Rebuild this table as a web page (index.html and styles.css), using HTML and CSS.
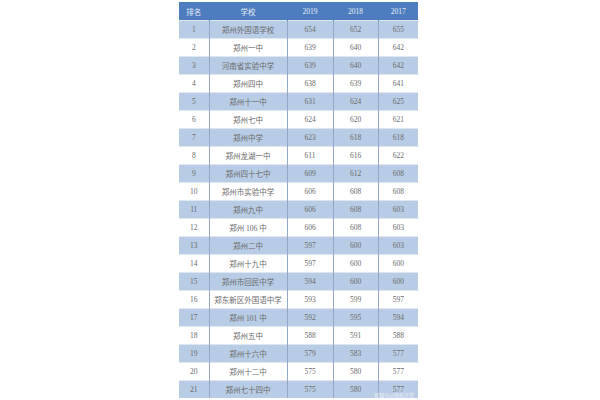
FILE: index.html
```html
<!DOCTYPE html>
<html>
<head>
<meta charset="utf-8">
<link rel="stylesheet" href="styles.css">
</head>
<body>
<div class="wrap">
<table class="rank">
<colgroup><col class="c1"><col class="c2"><col class="c3"><col class="c4"><col class="c5"></colgroup>
<thead>
<tr><th>排名</th><th>学校</th><th>2019</th><th>2018</th><th>2017</th></tr>
</thead>
<tbody>
<tr><td>1</td><td>郑州外国语学校</td><td>654</td><td>652</td><td>655</td></tr>
<tr><td>2</td><td>郑州一中</td><td>639</td><td>640</td><td>642</td></tr>
<tr><td>3</td><td>河南省实验中学</td><td>639</td><td>640</td><td>642</td></tr>
<tr><td>4</td><td>郑州四中</td><td>638</td><td>639</td><td>641</td></tr>
<tr><td>5</td><td>郑州十一中</td><td>631</td><td>624</td><td>625</td></tr>
<tr><td>6</td><td>郑州七中</td><td>624</td><td>620</td><td>621</td></tr>
<tr><td>7</td><td>郑州中学</td><td>623</td><td>618</td><td>618</td></tr>
<tr><td>8</td><td>郑州龙湖一中</td><td>611</td><td>616</td><td>622</td></tr>
<tr><td>9</td><td>郑州四十七中</td><td>609</td><td>612</td><td>608</td></tr>
<tr><td>10</td><td>郑州市实验中学</td><td>606</td><td>608</td><td>608</td></tr>
<tr><td>11</td><td>郑州九中</td><td>606</td><td>608</td><td>603</td></tr>
<tr><td>12</td><td>郑州 106 中</td><td>606</td><td>608</td><td>603</td></tr>
<tr><td>13</td><td>郑州二中</td><td>597</td><td>600</td><td>603</td></tr>
<tr><td>14</td><td>郑州十九中</td><td>597</td><td>600</td><td>600</td></tr>
<tr><td>15</td><td>郑州市回民中学</td><td>594</td><td>600</td><td>600</td></tr>
<tr><td>16</td><td>郑东新区外国语中学</td><td>593</td><td>599</td><td>597</td></tr>
<tr><td>17</td><td>郑州 101 中</td><td>592</td><td>595</td><td>594</td></tr>
<tr><td>18</td><td>郑州五中</td><td>588</td><td>591</td><td>588</td></tr>
<tr><td>19</td><td>郑州十六中</td><td>579</td><td>583</td><td>577</td></tr>
<tr><td>20</td><td>郑州十二中</td><td>575</td><td>580</td><td>577</td></tr>
<tr><td>21</td><td>郑州七十四中</td><td>575</td><td>580</td><td>577</td></tr>
</tbody>
</table>
<span class="mark">搜狐号@择校学堂</span>
</div>
</body>
</html>
```
FILE: styles.css
```css
html, body {
  margin: 0;
  padding: 0;
  background: #ffffff;
}
.wrap {
  position: relative;
  width: 239px;
  margin: 2px 0 0 179px;
}
.rank {
  border-collapse: collapse;
  table-layout: fixed;
  width: 239px;
  font-family: "Liberation Serif", "Noto Sans CJK SC", serif;
  font-size: 7.5px;
  color: #6a6a6a;
}
.c1 { width: 30px; }
.c2 { width: 78px; }
.c3 { width: 46px; }
.c4 { width: 45px; }
.c5 { width: 40px; }
.rank th {
  height: 18px;
  padding: 0;
  background: #4d7dbf;
  color: #e6edf7;
  font-weight: normal;
  text-align: center;
  border-left: 1px solid #4d7dbf;
}
.rank td {
  height: 17px;
  padding: 0;
  text-align: center;
  border-top: 1px solid #dfe7f1;
  border-left: 1px solid #93a8c6;
}
.rank td:first-child, .rank th:first-child {
  border-left: none;
}
.rank tbody tr:nth-child(odd) td {
  background: #b9cce5;
}
.rank tbody tr:nth-child(even) td {
  background: #ffffff;
}
.mark {
  position: absolute;
  right: 4px;
  bottom: 0;
  line-height: 6px;
  font-family: "Noto Sans CJK SC", sans-serif;
  font-size: 5px;
  color: rgba(255, 255, 255, 0.75);
}
```
